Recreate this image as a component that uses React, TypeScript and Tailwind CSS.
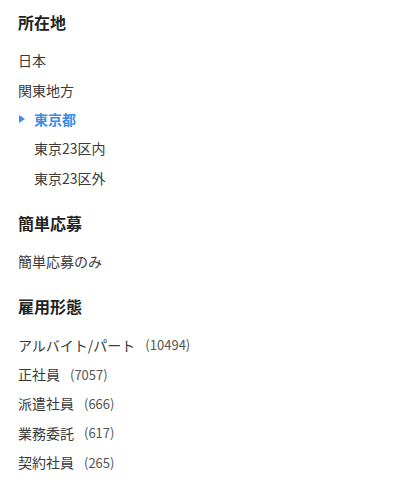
import React from "react";

type Item = { label: string; count?: number; active?: boolean; indent?: boolean };

const sections: { title: string; items: Item[] }[] = [
  {
    title: "所在地",
    items: [
      { label: "日本" },
      { label: "関東地方" },
      { label: "東京都", active: true },
      { label: "東京23区内", indent: true },
      { label: "東京23区外", indent: true },
    ],
  },
  { title: "簡単応募", items: [{ label: "簡単応募のみ" }] },
  {
    title: "雇用形態",
    items: [
      { label: "アルバイト/パート", count: 10494 },
      { label: "正社員", count: 7057 },
      { label: "派遣社員", count: 666 },
      { label: "業務委託", count: 617 },
      { label: "契約社員", count: 265 },
    ],
  },
];

function FilterRow({ item }: { item: Item }) {
  return (
    <li className="relative flex h-[29.4px] items-center">
      {item.active && (
        <svg
          className="absolute left-[1px] top-1/2 -translate-y-1/2"
          width="6"
          height="8"
          viewBox="0 0 6 8"
        >
          <path d="M0 0 L6 4 L0 8 Z" fill="#3b8ee8" />
        </svg>
      )}
      <span
        className={
          item.active
            ? "pl-4 font-bold text-[#3b8ee8]"
            : item.indent
              ? "pl-4 text-[#3a3a3a]"
              : "text-[#3a3a3a]"
        }
      >
        {item.label}
      </span>
      {item.count != null && (
        <span className="ml-2.5 text-[13px] text-[#555]">({item.count})</span>
      )}
    </li>
  );
}

export default function App() {
  return (
    <div
      className="min-h-[485px] w-[410px] bg-white px-[18px] pt-[10px] text-[14px]"
      style={{ fontFamily: '"Noto Sans CJK JP", "Noto Sans", sans-serif' }}
    >
      {sections.map((s) => (
        <section key={s.title} className="mb-[18px]">
          <h3 className="text-[16px] font-bold leading-6 text-[#222]">{s.title}</h3>
          <ul className="mt-3">
            {s.items.map((it) => (
              <FilterRow key={it.label} item={it} />
            ))}
          </ul>
        </section>
      ))}
    </div>
  );
}
